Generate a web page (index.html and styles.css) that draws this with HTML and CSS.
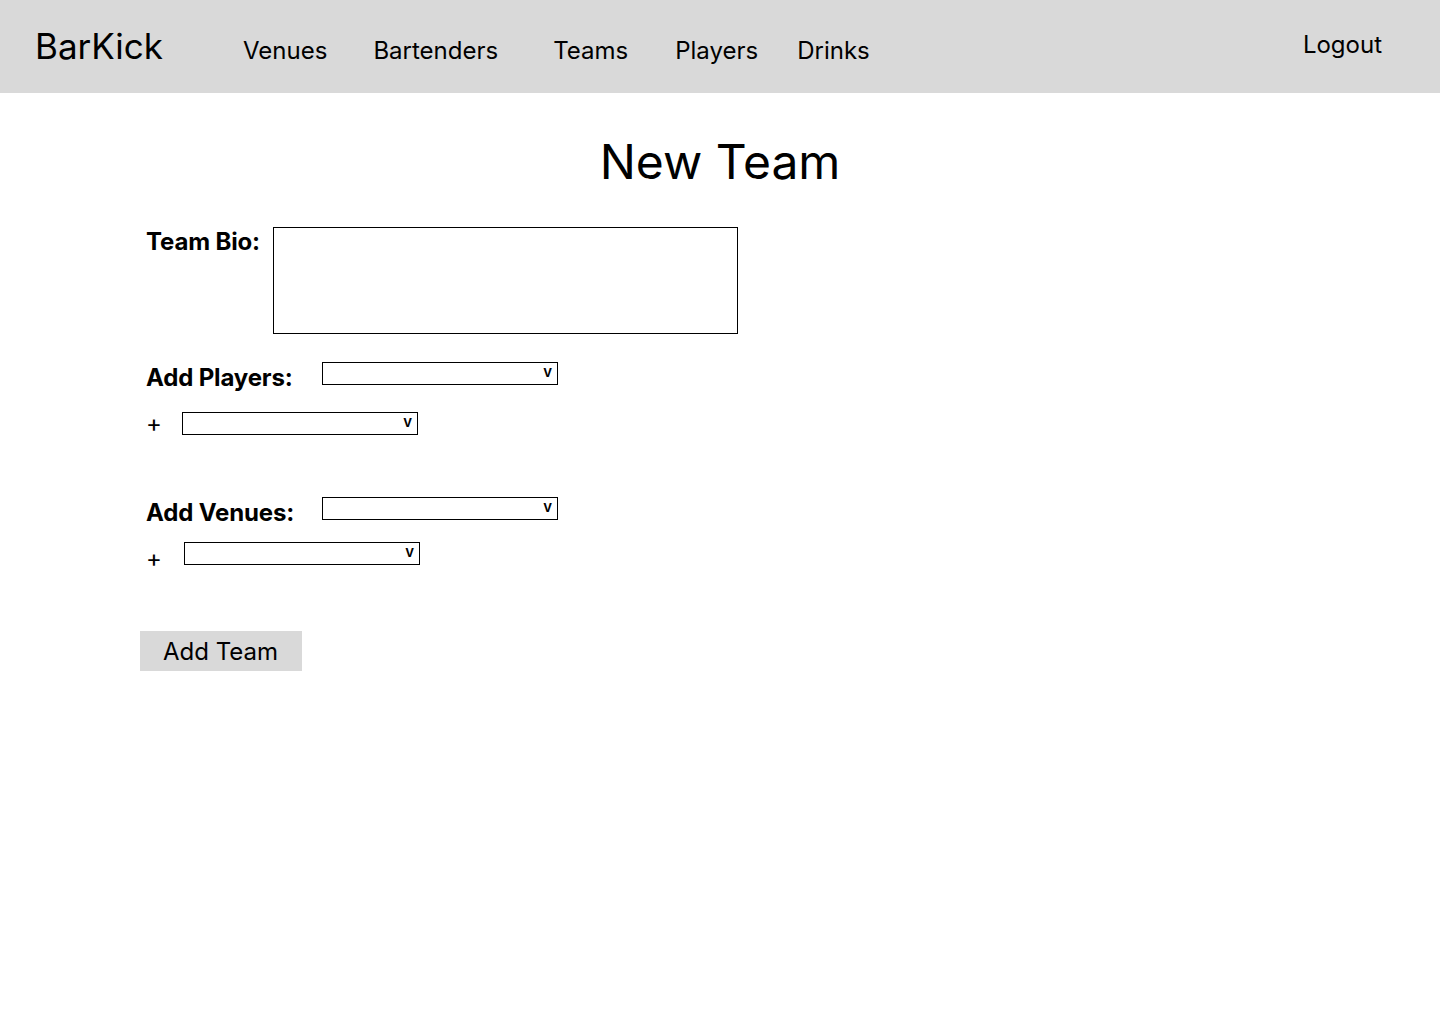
FILE: index.html
```html
<!DOCTYPE html>
<html lang="en">
<head>
<meta charset="utf-8">
<title>BarKick - New Team</title>
<link rel="stylesheet" href="styles.css">
</head>
<body>
<header class="topbar">
  <a class="brand" href="#">BarKick</a>
  <nav class="nav">
    <a class="nav-link nav-venues" href="#">Venues</a>
    <a class="nav-link nav-bartenders" href="#">Bartenders</a>
    <a class="nav-link nav-teams" href="#">Teams</a>
    <a class="nav-link nav-players" href="#">Players</a>
    <a class="nav-link nav-drinks" href="#">Drinks</a>
  </nav>
  <a class="logout" href="#">Logout</a>
</header>

<main class="page">
  <h1 class="title">New Team</h1>

  <form class="form">
    <div class="bio-row">
      <label class="label bio-label">Team Bio:</label>
      <div class="textarea"></div>
    </div>

    <div class="field-row players-row">
      <label class="label">Add Players:</label>
      <div class="select"><span class="chev">v</span></div>
    </div>
    <div class="plus-row plus-players">
      <span class="plus">+</span>
      <div class="select"><span class="chev">v</span></div>
    </div>

    <div class="field-row venues-row">
      <label class="label">Add Venues:</label>
      <div class="select"><span class="chev">v</span></div>
    </div>
    <div class="plus-row plus-venues">
      <span class="plus">+</span>
      <div class="select"><span class="chev">v</span></div>
    </div>

    <button type="button" class="submit">Add Team</button>
  </form>
</main>
</body>
</html>
```

FILE: styles.css
```css
* { box-sizing: border-box; }

html, body {
  margin: 0;
  padding: 0;
  background: #ffffff;
  color: #000000;
  font-family: Inter, "Noto Sans", "Liberation Sans", sans-serif;
}

a { color: inherit; text-decoration: none; }

.topbar {
  height: 93px;
  background: #d9d9d9;
  display: flex;
  align-items: flex-start;
  padding: 0 58px 0 35px;
}

.brand {
  font-size: 35px;
  line-height: 44px;
  margin-top: 24px;
}

.nav {
  display: flex;
  margin-top: 36px;
  font-size: 24px;
  line-height: 29px;
}

.nav-venues { margin-left: 80px; }
.nav-bartenders { margin-left: 46px; }
.nav-teams { margin-left: 55px; }
.nav-players { margin-left: 47px; }
.nav-drinks { margin-left: 39px; }

.logout {
  margin-left: auto;
  margin-top: 30px;
  font-size: 24px;
  line-height: 29px;
}

.page {
  padding: 0 0 0 146px;
}

.title {
  margin: 40px 0 0 -146px;
  text-align: center;
  font-size: 48px;
  line-height: 58px;
  font-weight: 400;
}

.form {
  display: flex;
  flex-direction: column;
  align-items: flex-start;
}

.label {
  font-size: 24px;
  line-height: 29px;
  font-weight: 700;
  letter-spacing: -0.15px;
}

.bio-row {
  display: flex;
  align-items: flex-start;
  margin-top: 36px;
}

.bio-label {
  width: 127px;
}

.textarea {
  width: 465px;
  height: 107px;
  border: 1px solid #000;
}

.field-row {
  display: grid;
  grid-template-columns: 176px 236px;
  grid-template-rows: 23px;
  align-items: start;
}

.field-row .label { padding-top: 1px; }

.players-row { margin-top: 28px; }
.venues-row { margin-top: 62px; }

.select {
  width: 236px;
  height: 23px;
  border: 1px solid #000;
  display: flex;
  justify-content: flex-end;
  align-items: center;
  padding-right: 5px;
}

.chev {
  font-size: 15px;
  line-height: 15px;
  font-weight: 600;
  margin-top: -4px;
}

.plus-row {
  display: flex;
  align-items: center;
  height: 23px;
}

.plus {
  font-size: 24px;
  line-height: 23px;
}

.plus-players { margin-top: 27px; }
.plus-players .plus { width: 36px; }

.plus-venues { margin-top: 22px; }
.plus-venues .plus { width: 38px; margin-top: 9px; }

.submit {
  margin: 66px 0 0 -6px;
  width: 162px;
  height: 40px;
  background: #d9d9d9;
  border: 0;
  padding: 0 0 0 23px;
  text-align: left;
  font-family: inherit;
  font-size: 24px;
  line-height: 29px;
  color: #000;
}
```
